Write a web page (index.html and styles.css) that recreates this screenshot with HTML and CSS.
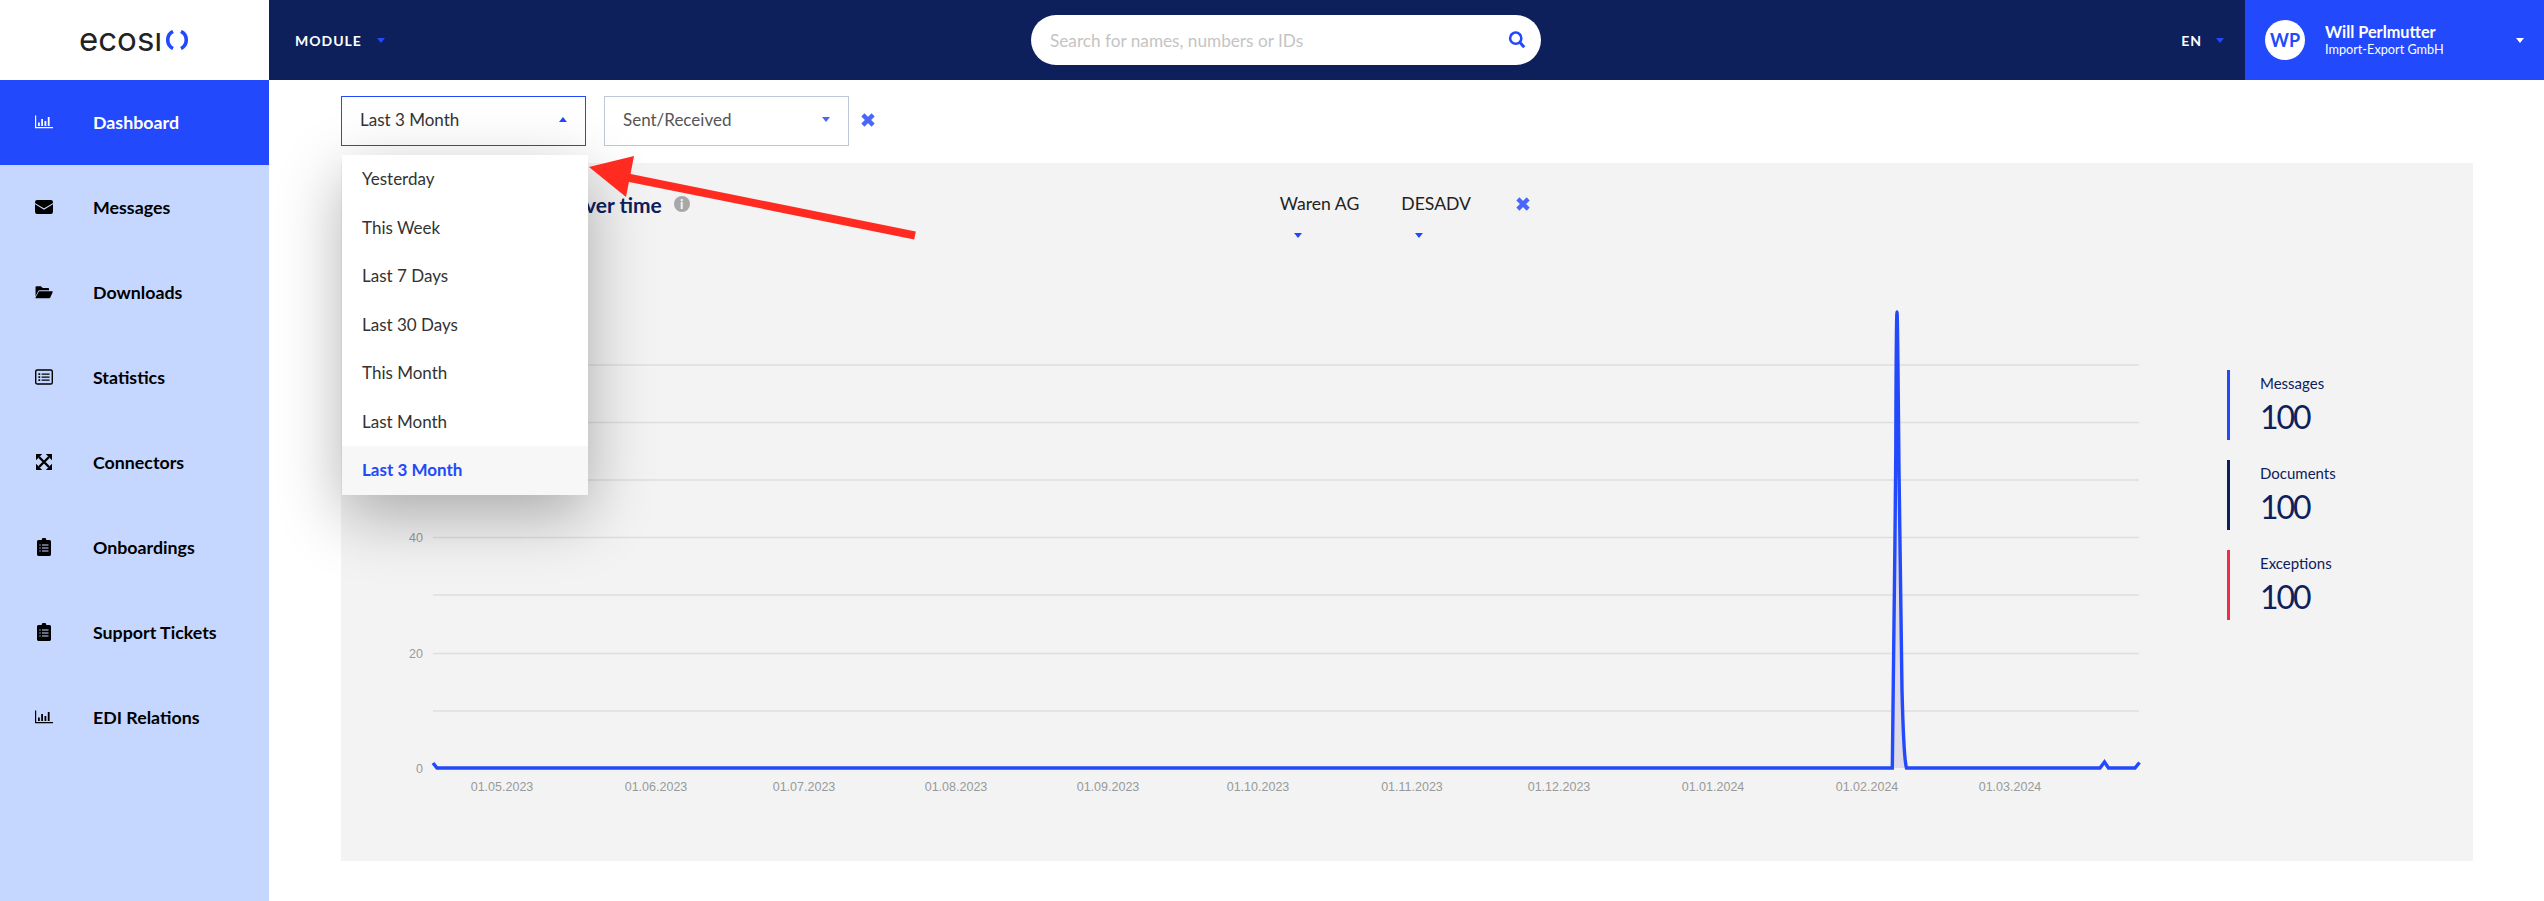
FILE: index.html
```html
<!DOCTYPE html>
<html lang="en">
<head>
    <meta charset="UTF-8">
    <meta name="viewport" content="width=device-width, initial-scale=1.0">
    <title>ecosio Dashboard</title>
    <link rel="stylesheet" href="styles.css">
</head>
<body>
    <!-- icon set -->
    <svg class="icon-defs" width="0" height="0">
        <symbol id="i-bars" viewBox="0 0 18 18">
            <path d="M.6 2.5V14.6H18" fill="none" stroke="currentColor" stroke-width="1.2"/>
            <path d="M3 9.5h1.8v3.6H3zM6.2 6h1.8v7.1H6.2zM9.5 8h1.8v5.1H9.5zM12.8 4h1.8v9.1h-1.8z" fill="currentColor"/>
        </symbol>
        <symbol id="i-mail" viewBox="0 0 18 18">
            <rect y="2" width="18" height="14" rx="2.2" fill="currentColor"/>
            <path d="M0 5.6 9 11l9-5.4" fill="none" stroke="#c5d7ff" stroke-width="1.1"/>
        </symbol>
        <symbol id="i-folder" viewBox="0 0 20 18">
            <path d="M.6 14V3.5a1 1 0 0 1 1-1h5l2 2h6a1 1 0 0 1 1 1V7H5.2a2 2 0 0 0-1.8 1.1z" fill="currentColor"/>
            <path d="M4.4 8.2H19a.7.7 0 0 1 .6 1.1L17 15.2a1.4 1.4 0 0 1-1.2.8H.8a.4.4 0 0 1-.3-.6z" fill="currentColor"/>
        </symbol>
        <symbol id="i-list" viewBox="0 0 18 18">
            <rect x=".7" y="2" width="16.6" height="14" rx="1.6" fill="none" stroke="currentColor" stroke-width="1.4"/>
            <path d="M3.4 5.2h1.8V7H3.4zM3.4 8.2h1.8V10H3.4zM3.4 11.2h1.8V13H3.4zM6.6 5.5h8v1.2h-8zM6.6 8.5h8v1.2h-8zM6.6 11.5h8v1.2h-8z" fill="currentColor"/>
        </symbol>
        <symbol id="i-expand" viewBox="0 0 18 18">
            <path d="M4 4l10 10M14 4 4 14" stroke="currentColor" stroke-width="2.4"/>
            <path d="M1 1h6.2L1 7.2zM17 1v6.2L10.8 1zM1 17v-6.2L7.2 17zM17 17h-6.2l6.2-6.2z" fill="currentColor"/>
        </symbol>
        <symbol id="i-clip" viewBox="0 0 18 18">
            <path d="M3.4 2h3.3a2.3 2.3 0 0 1 4.6 0h3.3a1.5 1.5 0 0 1 1.4 1.5v13a1.5 1.5 0 0 1-1.4 1.5H3.4a1.5 1.5 0 0 1-1.4-1.5v-13A1.5 1.5 0 0 1 3.4 2z" fill="currentColor"/>
            <path d="M4.4 6.5h1.2v1.1H4.4zM4.4 9.5h1.2v1.1H4.4zM4.4 12.5h1.2v1.1H4.4zM7 6.5h6.500v1.1H7zM7 9.5h6.500v1.1H7zM7 12.5h6.500v1.1H7z" fill="#c5d7ff"/>
        </symbol>
        <symbol id="i-times" viewBox="0 0 14 14">
            <path d="M2.5 2.5l9 9M11.5 2.5l-9 9" fill="none" stroke="currentColor" stroke-width="3.8"/>
        </symbol>
    </svg>

    <div class="app">
        <!-- top bar -->
        <a class="logo" href="#">
            <span class="logo-text">ecosı</span>
            <svg class="logo-mark" width="22" height="20" viewBox="0 0 22 20">
                <path d="M7 1.5a9.5 9.5 0 0 0 0 17M15 1.5a9.5 9.5 0 0 1 0 17" fill="none" stroke="#2249fb" stroke-width="3.6"/>
            </svg>
        </a>
        <header class="topbar">
            <div class="module-menu">MODULE<span class="caret caret-blue"></span></div>
            <div class="search">
                <span class="search-text">Search for names, numbers or IDs</span>
                <svg class="search-icon" width="18" height="18" viewBox="0 0 16 17">
                    <circle cx="6.8" cy="6.8" r="5.3" fill="none" stroke="#2249fb" stroke-width="2.4"/>
                    <path d="M10.8 10.8l4 4.6" stroke="#2249fb" stroke-width="2.8"/>
                </svg>
            </div>
            <div class="lang-menu">EN<span class="caret caret-blue"></span></div>
            <div class="user-menu">
                <div class="avatar">WP</div>
                <div class="user-info">
                    <div class="user-name">Will Perlmutter</div>
                    <div class="user-company">Import-Export GmbH</div>
                </div>
                <span class="caret caret-white"></span>
            </div>
        </header>

        <!-- navigation -->
        <nav class="sidebar">
            <a class="nav-item active" href="#"><svg class="nav-icon"><use href="#i-bars"/></svg>Dashboard</a>
            <a class="nav-item" href="#"><svg class="nav-icon"><use href="#i-mail"/></svg>Messages</a>
            <a class="nav-item" href="#"><svg class="nav-icon"><use href="#i-folder"/></svg>Downloads</a>
            <a class="nav-item" href="#"><svg class="nav-icon"><use href="#i-list"/></svg>Statistics</a>
            <a class="nav-item" href="#"><svg class="nav-icon"><use href="#i-expand"/></svg>Connectors</a>
            <a class="nav-item" href="#"><svg class="nav-icon"><use href="#i-clip"/></svg>Onboardings</a>
            <a class="nav-item" href="#"><svg class="nav-icon"><use href="#i-clip"/></svg>Support Tickets</a>
            <a class="nav-item" href="#"><svg class="nav-icon"><use href="#i-bars"/></svg>EDI Relations</a>
        </nav>

        <main class="content">
            <div class="filters">
                <div class="select select-open">
                    <span>Last 3 Month</span><span class="caret caret-up"></span>
                    <ul class="dropdown">
                        <li>Yesterday</li>
                        <li>This Week</li>
                        <li>Last 7 Days</li>
                        <li>Last 30 Days</li>
                        <li>This Month</li>
                        <li>Last Month</li>
                        <li class="selected">Last 3 Month</li>
                    </ul>
                </div>
                <div class="select">
                    <span>Sent/Received</span><span class="caret caret-light"></span>
                </div>
                <svg class="clear-icon clear-main"><use href="#i-times"/></svg>
            </div>

            <section class="panel">
                <div class="panel-head">
                    <div class="panel-title">Messages over time</div>
                    <span class="info-icon">i</span>
                    <div class="mini-filters">
                        <div class="mini-select">Waren AG<span class="caret caret-blue"></span></div>
                        <div class="mini-select">DESADV<span class="caret caret-blue"></span></div>
                        <svg class="clear-icon"><use href="#i-times"/></svg>
                    </div>
                </div>
                <div class="panel-body">
                    <!-- viewBox uses page coordinates -->
                    <svg class="chart" width="1780" height="520" viewBox="380 290 1780 520">
                        <g class="grid">
                            <path d="M433 365H2139M433 422.5H2139M433 480H2139M433 537.5H2139M433 595H2139M433 653.5H2139M433 711H2139"/>
                        </g>
                        <g class="y-labels">
                            <text x="423" y="542">40</text>
                            <text x="423" y="658">20</text>
                            <text x="423" y="773">0</text>
                        </g>
                        <g class="x-labels">
                            <text x="502" y="791">01.05.2023</text>
                            <text x="656" y="791">01.06.2023</text>
                            <text x="804" y="791">01.07.2023</text>
                            <text x="956" y="791">01.08.2023</text>
                            <text x="1108" y="791">01.09.2023</text>
                            <text x="1258" y="791">01.10.2023</text>
                            <text x="1412" y="791">01.11.2023</text>
                            <text x="1559" y="791">01.12.2023</text>
                            <text x="1713" y="791">01.01.2024</text>
                            <text x="1867" y="791">01.02.2024</text>
                            <text x="2010" y="791">01.03.2024</text>
                        </g>
                        <path class="area" d="M1892 768C1893 690 1895 560 1895.8 450 1896 370 1896.5 312 1897 312 1897.5 312 1898 370 1899 470 1900 580 1901 660 1902 690 1903 730 1904 760 1906.5 768Z"/>
                        <path class="line" d="M433 763 437 768H1892.3C1893 690 1895 560 1895.8 450 1896 370 1896.5 312 1897 312 1897.5 312 1898 370 1899 470 1900 580 1901 660 1902 690 1903 730 1904 760 1906.5 768H2100L2104.5 762 2108.5 768H2135L2139.5 762.5"/>
                    </svg>
                    <div class="legend">
                        <div class="legend-item legend-messages">
                            <div class="legend-label">Messages</div>
                            <div class="legend-value">100</div>
                        </div>
                        <div class="legend-item legend-documents">
                            <div class="legend-label">Documents</div>
                            <div class="legend-value">100</div>
                        </div>
                        <div class="legend-item legend-exceptions">
                            <div class="legend-label">Exceptions</div>
                            <div class="legend-value">100</div>
                        </div>
                    </div>
                </div>
            </section>
        </main>
    </div>

    <!-- annotation arrow on top of the screenshot -->
    <svg class="annotation" width="340" height="100" viewBox="580 150 340 100">
        <path d="M915 235.5 625 177" stroke="#ff2a20" stroke-width="8"/>
        <path d="M589 167 634 156 626 197Z" fill="#ff2a20"/>
    </svg>
</body>
</html>
```

FILE: styles.css
```css
/* base */
body {
    margin: 0;
    font-family: Lato, "Liberation Sans", sans-serif;
    color: #222;
    background: #fff;
    overflow: hidden;
}

a {
    color: inherit;
    text-decoration: none;
}

.icon-defs {
    position: absolute;
}

.app {
    display: grid;
    grid-template-columns: 269px 1fr;
    grid-template-rows: 80px 1fr;
    height: 100vh;
}

/* carets */
.caret {
    display: inline-block;
    width: 0;
    height: 0;
    border-left: 4.5px solid transparent;
    border-right: 4.5px solid transparent;
    border-top: 5px solid #2249fb;
}

.caret-white {
    border-top-color: #fff;
}

.caret-light {
    border-top-color: #4a67fb;
}

.caret-up {
    border-top: 0;
    border-bottom: 5px solid #2249fb;
}

/* logo */
.logo {
    display: flex;
    align-items: center;
    gap: 4px;
    padding-left: 79px;
    background: #fff;
    position: relative;
    z-index: 3;
}

.logo-text {
    font-family: Inter, sans-serif;
    font-size: 33px;
    line-height: 1;
    color: #222;
    margin-top: -2px;
}

.logo-mark {
    margin-top: -1px;
}

/* top bar */
.topbar {
    display: flex;
    align-items: center;
    background: #0e205c;
    color: #fff;
    padding-left: 26px;
    position: relative;
    z-index: 3;
}

.module-menu,
.lang-menu {
    display: flex;
    align-items: center;
    font-size: 14px;
    font-weight: 700;
    letter-spacing: 1px;
}

.module-menu {
    gap: 15px;
    width: 736px;
}

.search {
    display: flex;
    align-items: center;
    justify-content: space-between;
    box-sizing: border-box;
    width: 510px;
    height: 50px;
    padding: 0 15px 0 19px;
    background: #fff;
    border-radius: 25px;
}

.search-text {
    font-size: 17.2px;
    color: #c4c4c4;
}

.lang-menu {
    gap: 14px;
    margin-left: auto;
    margin-right: 21px;
}

.user-menu {
    display: flex;
    align-items: center;
    box-sizing: border-box;
    width: 299px;
    height: 80px;
    padding: 0 20px;
    background: #2249fb;
}

.avatar {
    display: flex;
    align-items: center;
    justify-content: center;
    width: 40px;
    height: 40px;
    border-radius: 50%;
    background: #fff;
    color: #2249fb;
    font-size: 18px;
    font-weight: 700;
}

.user-info {
    margin: -2px 0 0 20px;
    flex: 1;
}

.user-name {
    font-size: 16.3px;
    font-weight: 700;
    line-height: 19px;
}

.user-company {
    font-size: 12.7px;
    line-height: 16px;
}

/* sidebar */
.sidebar {
    background: #c5d7ff;
    position: relative;
    z-index: 2;
}

.nav-item {
    display: flex;
    align-items: center;
    gap: 40px;
    box-sizing: border-box;
    height: 85px;
    padding: 0 0 2px 35px;
    font-size: 17.8px;
    font-weight: 700;
    color: #000;
}

.nav-item.active {
    background: #2249fb;
    color: #fff;
}

.nav-icon {
    width: 18px;
    height: 18px;
}

/* filters */
.content {
    padding: 16px 71px 0 72px;
}

.filters {
    display: flex;
    align-items: center;
    gap: 18px;
    position: relative;
    z-index: 1;
}

.select {
    display: flex;
    align-items: center;
    justify-content: space-between;
    box-sizing: border-box;
    width: 245px;
    height: 50px;
    padding: 0 18px 4px;
    border: 1px solid #c0c8d8;
    font-size: 17px;
    color: #555;
    background: #fff;
    position: relative;
}

.select-open {
    border-color: #2249fb;
    color: #333;
    z-index: 1;
}

.clear-icon {
    width: 16px;
    height: 16px;
    color: #4a67fb;
}

.clear-main {
    margin: -2px 0 0 -7px;
}

/* open menu */
.dropdown {
    position: absolute;
    top: 58px;
    left: 0;
    width: 246px;
    margin: 0;
    padding: 0;
    list-style: none;
    background: #fff;
    box-shadow: 0 20px 60px rgba(0, 0, 0, 0.3);
    font-size: 17px;
    color: #333;
}

.dropdown li {
    height: 48.57px;
    line-height: 48.57px;
    padding-left: 20px;
}

.dropdown .selected {
    background: #f7f7f7;
    color: #2249fb;
    font-weight: 700;
}

/* chart panel */
.panel {
    box-sizing: border-box;
    height: 698px;
    margin-top: 17px;
    background: #f3f3f3;
}

.panel-head {
    display: flex;
    align-items: center;
    height: 82px;
    padding: 0 0 0 136px;
    box-sizing: border-box;
}

.panel-title {
    font-size: 21px;
    font-weight: 700;
    color: #0e205c;
}

.info-icon {
    display: flex;
    align-items: center;
    justify-content: center;
    width: 16px;
    height: 16px;
    margin-left: 12px;
    border-radius: 50%;
    background: #a8a8a8;
    color: #f3f3f3;
    font-size: 13px;
    font-weight: 900;
}

.mini-filters {
    display: flex;
    gap: 42px;
    margin-left: 590px;
    align-self: flex-start;
    padding-top: 29px;
}

.mini-select {
    font-size: 17.6px;
    line-height: 24px;
    color: #222;
}

.mini-select .caret {
    display: block;
    margin: 17px 0 0 14px;
}

.mini-filters .clear-icon {
    margin: 4px 0 0 2px;
}

.panel-body {
    display: flex;
    padding: 45px 0 0 39px;
}

/* chart */
.chart {
    flex: none;
    display: block;
}

.grid path {
    fill: none;
    stroke: #dedede;
    stroke-width: 1.5;
}

.y-labels text {
    font-family: "Liberation Sans", sans-serif;
    font-size: 12.5px;
    fill: #999;
    text-anchor: end;
}

.x-labels text {
    font-family: "Liberation Sans", sans-serif;
    font-size: 12.5px;
    fill: #999;
    text-anchor: middle;
}

.area {
    fill: #ded9e6;
}

.line {
    fill: none;
    stroke: #2249fb;
    stroke-width: 3.4;
}

/* legend */
.legend {
    display: flex;
    flex-direction: column;
    gap: 20px;
    margin: 80px 0 0 67px;
}

.legend-item {
    box-sizing: border-box;
    height: 70px;
    padding: 4px 0 0 30px;
    border-left: 3px solid #2249fb;
    color: #0e205c;
}

.legend-documents {
    border-left-color: #0e205c;
}

.legend-exceptions {
    border-left-color: #f22c46;
}

.legend-label {
    font-size: 15px;
    line-height: 18px;
}

.legend-value {
    margin-top: 5px;
    font-size: 32px;
    line-height: 40px;
    letter-spacing: -2px;
}

/* red arrow */
.annotation {
    position: absolute;
    left: 580px;
    top: 150px;
    z-index: 4;
}
```
